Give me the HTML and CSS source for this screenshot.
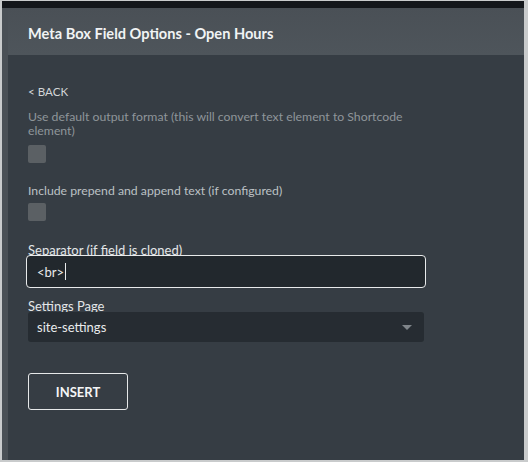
FILE: index.html
```html
<!DOCTYPE html>
<html>
<head>
<meta charset="utf-8">
<link rel="stylesheet" href="styles.css">
</head>
<body>
<div class="window">
  <div class="topbar"></div>
  <div class="stage">
    <div class="modal">
      <div class="modal-header">
        <h1 class="title">Meta Box Field Options - Open Hours</h1>
      </div>
      <div class="modal-body">
        <a class="back">&lt; BACK</a>
        <div class="field first">
          <div class="desc dim">Use default output format (this will convert text element to Shortcode element)</div>
          <span class="checkbox"></span>
        </div>
        <div class="field second">
          <div class="desc">Include prepend and append text (if configured)</div>
          <span class="checkbox"></span>
        </div>
        <div class="field tight">
          <div class="label">Separator (if field is cloned)</div>
          <div class="input"><span class="val">&lt;br&gt;</span><span class="caret"></span></div>
        </div>
        <div class="field tight">
          <div class="label">Settings Page</div>
          <div class="select"><span class="val">site-settings</span><span class="arrow"></span></div>
        </div>
        <button class="insert">INSERT</button>
      </div>
    </div>
  </div>
</div>
</body>
</html>
```
FILE: styles.css
```css
html, body {
  margin: 0;
  padding: 0;
  height: 100%;
}
body {
  background: #c9cbcc;
  font-family: "Lato", "Liberation Sans", sans-serif;
  font-size: 13px;
}
.window {
  box-sizing: border-box;
  height: 462px;
  padding: 1px 4px 2px 2px;
  display: flex;
  flex-direction: column;
}
.topbar {
  height: 7px;
  background: #14171b;
  flex: none;
}
.stage {
  flex: 1;
  background: #4a5056;
  padding-left: 6px;
  display: flex;
}
.modal {
  flex: 1;
  display: flex;
  flex-direction: column;
}
.modal-header {
  height: 47px;
  flex: none;
  background: linear-gradient(#4a5056, #4e555b);
  display: flex;
  align-items: center;
  padding-left: 20px;
}
.title {
  margin: 0;
  font-size: 14.6px;
  font-weight: 700;
  color: #f1f3f4;
  padding-top: 3px;
}
.modal-body {
  flex: 1;
  background: #363d44;
  padding: 29px 0 0 20px;
  display: flex;
  flex-direction: column;
  align-items: flex-start;
}
.back {
  color: #d3d6d9;
  font-size: 11.6px;
  line-height: 16px;
  margin-bottom: 10px;
}
.field {
  display: flex;
  flex-direction: column;
  align-items: flex-start;
}
.field.first {
  margin-bottom: 21px;
}
.field.second {
  margin-bottom: 22px;
}
.field.tight {
  margin-bottom: 11px;
}
.desc {
  color: #bcc1c4;
  font-size: 12.25px;
  line-height: 14px;
  width: 390px;
  margin-bottom: 5px;
}
.desc.dim {
  color: #8f959a;
  margin-bottom: 7px;
}
.checkbox {
  width: 18px;
  height: 18px;
  background: #5b6064;
  border-radius: 2px;
}
.label {
  color: #e3e6e8;
  font-size: 13px;
  line-height: 14px;
  margin-bottom: -2px;
}
.input {
  box-sizing: border-box;
  width: 400px;
  height: 33px;
  margin-left: -2px;
  border: 1.5px solid #e8eaeb;
  border-radius: 4px;
  background: #22282d;
  display: flex;
  align-items: center;
  padding-left: 10px;
  color: #e9ebec;
}
.caret {
  width: 1px;
  height: 17px;
  background: #e9ebec;
  margin-left: 1px;
}
.select {
  box-sizing: border-box;
  width: 396px;
  height: 30px;
  margin-top: 1px;
  border-radius: 3px;
  background: #262c32;
  display: flex;
  align-items: center;
  padding: 0 12px 0 9px;
  color: #e9ebec;
}
.select .val {
  flex: 1;
}
.arrow {
  width: 0;
  height: 0;
  border-left: 5px solid transparent;
  border-right: 5px solid transparent;
  border-top: 5px solid #7f858a;
}
.insert {
  margin-top: 20px;
  width: 100px;
  height: 37px;
  background: transparent;
  border: 1px solid #e6e8e9;
  border-radius: 3px;
  color: #f4f5f6;
  font-family: "Lato", "Liberation Sans", sans-serif;
  font-weight: 700;
  font-size: 13px;
  padding: 0;
}
```
